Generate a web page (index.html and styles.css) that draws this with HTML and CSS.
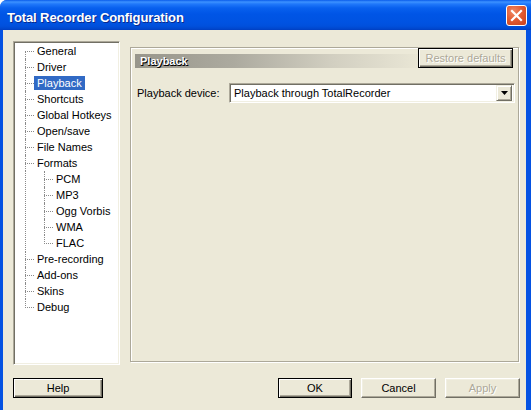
FILE: index.html
```html
<!DOCTYPE html>
<html>
<head>
<meta charset="utf-8">
<title>Total Recorder Configuration</title>
<link rel="stylesheet" href="styles.css">
</head>
<body>
<div class="window">
  <div class="titlebar">
    <span class="title">Total Recorder Configuration</span>
    <button class="close" aria-label="Close">
      <svg width="19" height="19" viewBox="0 0 19 19"><path d="M5 5L14 14M14 5L5 14" stroke="#fff" stroke-width="2.2" stroke-linecap="square" fill="none"/></svg>
    </button>
  </div>
  <div class="client">
    <div class="main">
      <div class="tree">
        <div class="row first"><span class="lbl">General</span></div>
        <div class="row"><span class="lbl">Driver</span></div>
        <div class="row"><span class="lbl sel">Playback</span></div>
        <div class="row"><span class="lbl">Shortcuts</span></div>
        <div class="row"><span class="lbl">Global Hotkeys</span></div>
        <div class="row"><span class="lbl">Open/save</span></div>
        <div class="row"><span class="lbl">File Names</span></div>
        <div class="row"><span class="lbl">Formats</span></div>
        <div class="row sub"><span class="lbl">PCM</span></div>
        <div class="row sub"><span class="lbl">MP3</span></div>
        <div class="row sub"><span class="lbl">Ogg Vorbis</span></div>
        <div class="row sub"><span class="lbl">WMA</span></div>
        <div class="row sub sublast"><span class="lbl">FLAC</span></div>
        <div class="row"><span class="lbl">Pre-recording</span></div>
        <div class="row"><span class="lbl">Add-ons</span></div>
        <div class="row"><span class="lbl">Skins</span></div>
        <div class="row last"><span class="lbl">Debug</span></div>
      </div>
      <div class="panel">
        <div class="panel-head">
          <div class="head-bar">Playback</div>
          <button class="btn def restore" disabled>Restore defaults</button>
        </div>
        <div class="field">
          <span class="field-label">Playback device:</span>
          <div class="combo">
            <span class="combo-text">Playback through TotalRecorder</span>
            <span class="combo-btn"><svg width="7" height="4" viewBox="0 0 7 4"><path d="M0 0H7L3.5 4Z" fill="#000"/></svg></span>
          </div>
        </div>
      </div>
    </div>
    <div class="buttons">
      <button class="btn def help">Help</button>
      <div class="spacer"></div>
      <button class="btn def ok">OK</button>
      <button class="btn cancel">Cancel</button>
      <button class="btn apply" disabled>Apply</button>
    </div>
  </div>
</div>
</body>
</html>
```

FILE: styles.css
```css
* { box-sizing: border-box; }
html, body { margin: 0; padding: 0; background: #fff; }
body { font-family: "Liberation Sans", Arial, sans-serif; font-size: 11px; color: #000; }

.window {
  width: 531px;
  height: 410px;
  display: flex;
  flex-direction: column;
  background: #0552E2;
  border-top-left-radius: 7px;
  overflow: hidden;
}

.titlebar {
  height: 30px;
  flex: none;
  display: flex;
  align-items: center;
  padding: 0 4px 0 7px;
  background: linear-gradient(#0A5CEA 0, #3D92FF 2px, #2078FA 4px, #0860EE 8px, #0055E6 14px, #0053E2 22px, #0050DC 26px, #0046CC 29px, #003DBF 30px);
}
.title {
  flex: 1;
  color: #fff;
  font-weight: bold;
  font-size: 13px;
  letter-spacing: -0.1px;
  text-shadow: 1px 1px 0 #0A2A8C;
  padding-top: 4px;
}
.close {
  width: 21px;
  height: 21px;
  padding: 0;
  margin-top: 1px;
  border: 1px solid #fff;
  border-radius: 3px;
  background: radial-gradient(circle at 35% 30%, #F08A66 0, #E35C33 45%, #C9401A 100%);
  display: flex;
  align-items: center;
  justify-content: center;
}

.client {
  flex: 1;
  background: #ECE9D8;
  margin: 0 5px 0 3px;
  padding: 11px 6px 0 10px;
}

.main {
  display: flex;
  gap: 10px;
  height: 324px;
}

.tree {
  width: 107px;
  height: 324px;
  background: #fff;
  border: 1px solid;
  border-color: #ACA899 #fff #fff #ACA899;
  box-shadow: inset 1px 1px 0 #716F64, inset -1px -1px 0 #F1EFE2;
  padding: 1px;
}
.row {
  position: relative;
  height: 16px;
  padding-left: 19px;
  display: flex;
  align-items: center;
}
.row::before {
  content: "";
  position: absolute;
  left: 10px;
  top: 8px;
  width: 9px;
  border-top: 1px dotted #8A8A8A;
}
.row::after {
  content: "";
  position: absolute;
  left: 10px;
  top: 0;
  height: 16px;
  border-left: 1px dotted #8A8A8A;
}
.row.first::after { top: 8px; height: 8px; }
.row.last::after { height: 9px; }
.row.sub { padding-left: 38px; }
.row.sub::before { left: 29px; width: 9px; }
.row.sub::after { left: 29px; }
.row.sublast::after { height: 9px; }
.row.sub {
  background: repeating-linear-gradient(to bottom, #8A8A8A 0 1px, transparent 1px 2px) 10px 0 / 1px 16px no-repeat;
}
.lbl {
  line-height: 14px;
  padding: 0 3px 0 3px;
  white-space: nowrap;
}
.lbl.sel { background: #316AC5; color: #fff; }

.panel {
  width: 389px;
  height: 315px;
  margin-top: 6px;
  border: 1px solid #ACA899;
  box-shadow: inset 1px 1px 0 #fff, 1px 1px 0 #fff;
  padding: 2px 5px 0 4px;
}
.panel-head {
  display: flex;
  align-items: flex-end;
  height: 18px;
}
.head-bar {
  flex: 1;
  height: 14px;
  line-height: 14px;
  padding-left: 5px;
  color: #fff;
  font-weight: bold;
  text-shadow: 1px 1px 0 #000, 0 1px 0 #222;
  background: linear-gradient(to right, #98968B 0, #ACAA9F 35%, #D2CFC1 70%, #E9E6D5 100%);
}
.restore { width: 95px; height: 18px; }

.field {
  display: flex;
  align-items: center;
  margin-top: 15px;
  margin-right: -2px;
  padding-left: 2px;
}
.field-label { width: 92px; flex: none; }
.combo {
  width: 286px;
  height: 20px;
  display: flex;
  align-items: center;
  background: #fff;
  border: 1px solid;
  border-color: #ACA899 #fff #fff #ACA899;
  box-shadow: inset 1px 1px 0 #716F64, inset -1px -1px 0 #F1EFE2;
  padding: 1px 1px 1px 4px;
}
.combo-text { flex: 1; white-space: nowrap; }
.combo-btn {
  width: 16px;
  height: 16px;
  margin-right: 1px;
  display: flex;
  align-items: center;
  justify-content: center;
  background: #ECE9D8;
  border: 1px solid;
  border-color: #F1EFE2 #716F64 #716F64 #F1EFE2;
  box-shadow: inset 1px 1px 0 #fff, inset -1px -1px 0 #ACA899;
}

.buttons {
  display: flex;
  gap: 9px;
  margin-top: 13px;
  height: 20px;
}
.spacer { flex: 1; }
.btn {
  font-family: "Liberation Sans", Arial, sans-serif;
  font-size: 11px;
  color: #000;
  height: 20px;
  padding: 0;
  background: #ECE9D8;
  border: 1px solid;
  border-color: #fff #716F64 #716F64 #fff;
  box-shadow: inset -1px -1px 0 #ACA899, inset 1px 1px 0 #F1EFE2;
}
.btn.def {
  border: 1px solid #000;
  box-shadow: inset 1px 1px 0 #fff, inset -1px -1px 0 #716F64, inset -2px -2px 0 #ACA899;
}
.btn:disabled { color: #ACA899; text-shadow: 1px 1px 0 #fff; }
.help { width: 90px; }
.ok { width: 74px; }
.cancel { width: 75px; }
.apply { width: 75px; }
```
